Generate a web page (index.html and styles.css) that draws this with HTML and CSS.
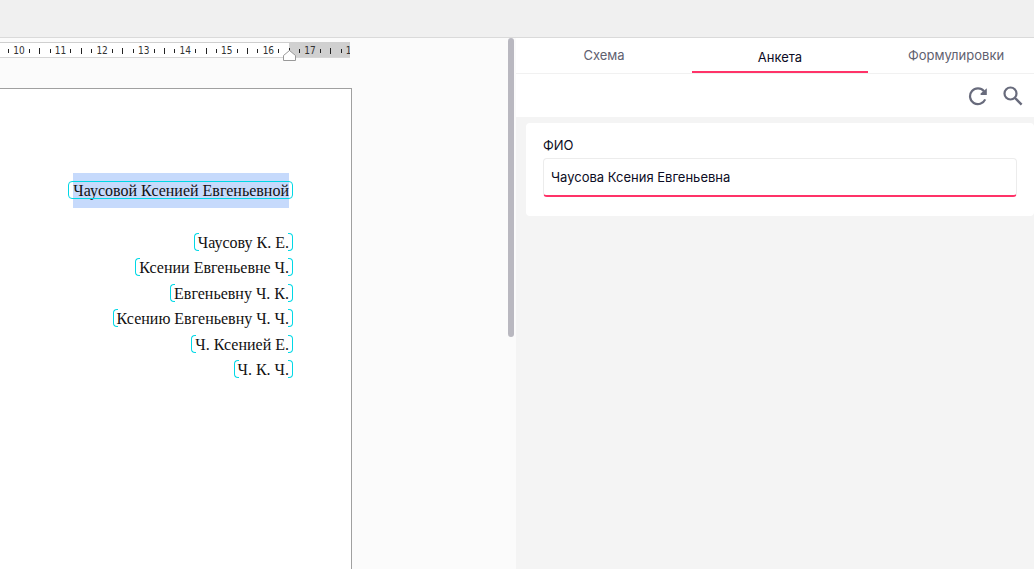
FILE: index.html
```
<!DOCTYPE html>
<html lang="ru">
  <head>
    <meta charset="UTF-8" />
    <meta name="viewport" content="width=device-width, initial-scale=1.0" />
    <title>Анкета</title>
    <link rel="stylesheet" href="styles.css">
  </head>
  <body>
    <header class="topbar"></header>
    <main class="workspace">
      <section class="editor">
        <div class="canvas">
          <div class="ruler">
            <ol class="ruler-scale">
              <li><i class="half"></i><i></i><span>10</span><i></i></li>
              <li><i class="half"></i><i></i><span>11</span><i></i></li>
              <li><i class="half"></i><i></i><span>12</span><i></i></li>
              <li><i class="half"></i><i></i><span>13</span><i></i></li>
              <li><i class="half"></i><i></i><span>14</span><i></i></li>
              <li><i class="half"></i><i></i><span>15</span><i></i></li>
              <li><i class="half"></i><i></i><span>16</span><i></i></li>
              <li><i class="half"></i><i></i><span>17</span><i></i></li>
              <li><i class="half"></i><i></i><span>18</span><i></i></li>
            </ol>
          </div>
          <svg class="indent-marker" viewBox="0 0 13 12" width="13" height="12">
            <path d="M.5 10.5V5.5L6.5.5l6 5v5z" fill="#fff" stroke="#999" />
          </svg>
          <article class="page">
            <p class="selected"><span class="field field-active">Чаусовой Ксенией Евгеньевной</span></p>
            <div class="lines">
              <p><span class="field">Чаусову К. Е.</span></p>
              <p><span class="field">Ксении Евгеньевне Ч.</span></p>
              <p><span class="field">Евгеньевну Ч. К.</span></p>
              <p><span class="field">Ксению Евгеньевну Ч. Ч.</span></p>
              <p><span class="field">Ч. Ксенией Е.</span></p>
              <p><span class="field">Ч. К. Ч.</span></p>
            </div>
          </article>
        </div>
        <div class="scrollbar"><div class="scroll-thumb"></div></div>
      </section>

      <aside class="panel">
        <nav class="tabs">
          <button class="tab" type="button">Схема</button>
          <button class="tab active" type="button">Анкета</button>
          <button class="tab" type="button">Формулировки</button>
        </nav>
        <div class="toolbar">
          <button class="icon-button" type="button" aria-label="Обновить">
            <svg viewBox="0 0 20 20" width="20" height="20">
              <path d="M16 5.2A7.9 7.9 0 1 0 17.2 13.4" fill="none" stroke="#686b7c" stroke-width="2.2" />
              <path d="M18.8 2.2v6.8h-6.2v-1.4z" fill="#686b7c" />
            </svg>
          </button>
          <button class="icon-button" type="button" aria-label="Поиск">
            <svg viewBox="0 0 20 20" width="20" height="20">
              <circle cx="7.5" cy="7.5" r="6" fill="none" stroke="#686b7c" stroke-width="2.2" />
              <path d="M12 12l6.6 6.6" fill="none" stroke="#686b7c" stroke-width="2.4" />
            </svg>
          </button>
        </div>
        <form class="card">
          <label for="full-name">ФИО</label>
          <input id="full-name" type="text" value="Чаусова Ксения Евгеньевна">
        </form>
      </aside>
    </main>
  </body>
</html>
```
FILE: styles.css
```
* {
  box-sizing: border-box;
}

body {
  margin: 0;
  min-height: 100vh;
  display: flex;
  flex-direction: column;
  font-family: Inter, sans-serif;
  overflow: hidden;
}

p {
  margin: 0;
}

.topbar {
  height: 38px;
  background: #f0f0f0;
  border-bottom: 1px solid #dadada;
}

.workspace {
  flex: 1;
  display: grid;
  grid-template-columns: minmax(0, 516fr) minmax(0, 518fr);
}

/* Document side */
.editor {
  display: flex;
  background: #fbfbfb;
}

.canvas {
  flex: 1;
  position: relative;
  display: flex;
  flex-direction: column;
  padding-top: 4px;
}

.ruler {
  width: 350px;
  height: 16px;
  overflow: hidden;
  border-top: 1px solid #cfcfcf;
  border-bottom: 1px solid #d6d6d6;
  background: linear-gradient(to right, #fff 289px, #d0d0d0 289px);
}

.ruler-scale {
  width: 374px;
  height: 14px;
  margin: 0 0 0 -7px;
  padding: 1px 0 0;
  display: flex;
  list-style: none;
}

.ruler-scale li {
  flex: 1;
  display: grid;
  grid-template-columns: repeat(4, minmax(0, 1fr));
  align-items: center;
  justify-items: center;
}

.ruler-scale span {
  font: 10px/13px "DejaVu Sans Condensed", "DejaVu Sans", sans-serif;
  color: #333;
}

.ruler-scale i {
  width: 1px;
  height: 4px;
  background: #222;
}

.ruler-scale .half {
  height: 6px;
}

.indent-marker {
  position: absolute;
  left: 283px;
  top: 12px;
}

.page {
  flex: 1;
  width: 352px;
  margin-top: 30px;
  padding: 84px 62px 0 0;
  border: 1px solid #a0a0a0;
  border-left: 0;
  border-bottom: 0;
  background: #fff;
  color: #111;
  font: 16px/18px "Liberation Serif", serif;
  text-align: right;
}

.selected {
  width: fit-content;
  margin-left: auto;
  padding: 9px 0 8px;
  background: #c6dafc;
}

.lines {
  height: 153px;
  margin-top: 22px;
  display: grid;
  grid-template-rows: repeat(6, 1fr);
  align-items: center;
}

.field {
  position: relative;
  display: inline-block;
  white-space: nowrap;
}

.field::before,
.field::after {
  content: "";
  position: absolute;
  top: -1px;
  bottom: 1px;
  width: 4px;
  border: 1px solid #00d8e6;
}

.field::before {
  left: -4px;
  border-right: 0;
  border-radius: 4px 0 0 4px;
}

.field::after {
  right: -4px;
  border-left: 0;
  border-radius: 0 4px 4px 0;
}

.field-active::before {
  left: -5px;
  right: -4px;
  width: auto;
  border: 1px solid #00d8e6;
  border-radius: 4px;
}

.field-active::after {
  display: none;
}

.scrollbar {
  width: 8px;
}

.scroll-thumb {
  width: 6px;
  height: 299px;
  border-radius: 3px;
  background: #b9b8c0;
}

/* Form side, runs past the right edge of the window */
.panel {
  margin-right: -10px;
  background: #f4f4f4;
}

.tabs {
  height: 36px;
  display: flex;
  border-bottom: 1px solid #f1f1f1;
  background: #fff;
}

.tab {
  flex: 1;
  height: 35px;
  padding: 0;
  border: 0;
  border-bottom: 2px solid transparent;
  background: none;
  color: #5f6170;
  font: 13px/34px Inter, sans-serif;
  cursor: pointer;
}

.tab.active {
  padding-top: 2px;
  border-color: #ff3368;
  color: #0c0c24;
}

.toolbar {
  height: 43px;
  padding: 0 21px;
  display: flex;
  align-items: center;
  justify-content: flex-end;
  gap: 15px;
  background: #fff;
}

.icon-button {
  display: flex;
  padding: 0;
  border: 0;
  background: none;
  cursor: pointer;
}

.card {
  margin: 6px 10px;
  padding: 13px 17px 19px;
  border-radius: 4px;
  background: #fff;
  color: #0c0c24;
  font-size: 13px;
  line-height: 18px;
}

.card label {
  display: block;
  margin-bottom: 4px;
}

.card input {
  display: block;
  width: 100%;
  height: 39px;
  padding: 0 7px;
  border: 1px solid #ececec;
  border-bottom: 2px solid #ff3368;
  border-radius: 4px;
  outline: none;
  background: #fff;
  color: #0c0c24;
  font: 13px/18px Inter, sans-serif;
}
```
